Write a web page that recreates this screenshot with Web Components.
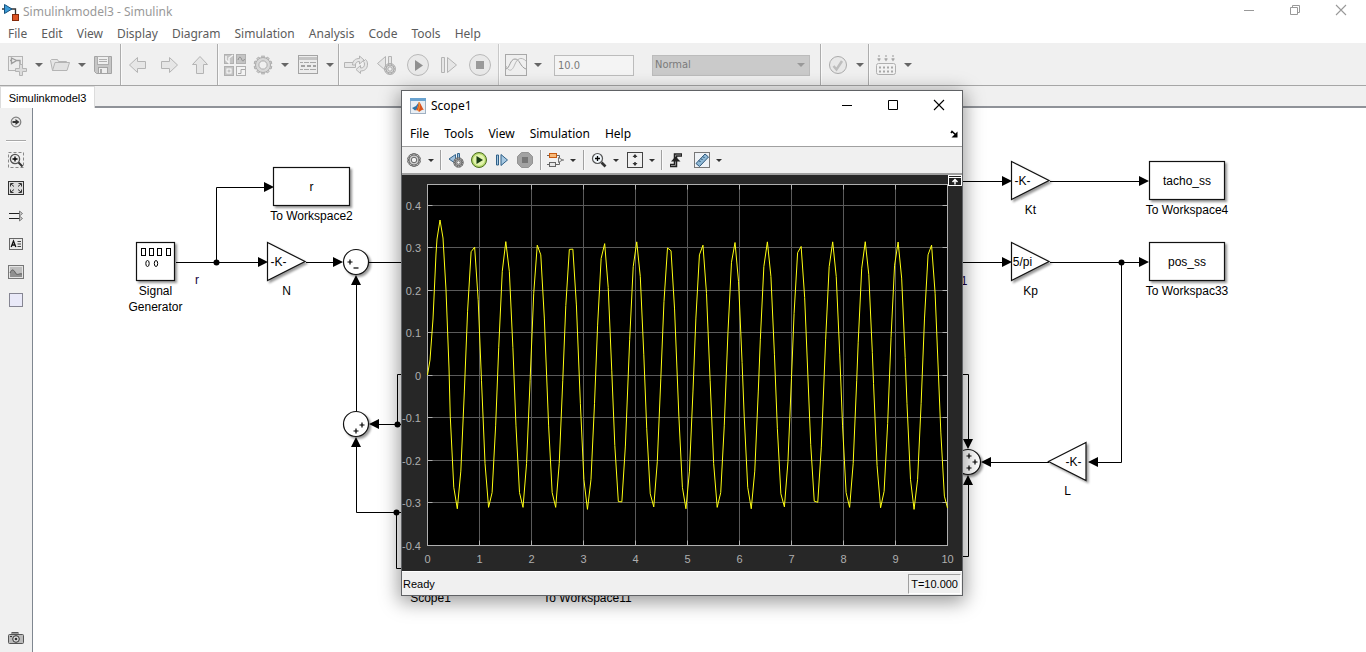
<!DOCTYPE html>
<html lang="en">
<head>
<meta charset="utf-8">
<title>Simulinkmodel3 - Simulink</title>
<style>
  html, body { height: 100%; margin: 0; }
  body { overflow: hidden; background: #fff; font: 12px/16px "Noto Sans", "Open Sans", sans-serif; color: #000; }
</style>
</head>
<body>
<model-editor></model-editor>
<script>
const RESET = `
  *, *::before, *::after { box-sizing: border-box; }
  button { font: inherit; color: inherit; background: none; border: 0; padding: 0; margin: 0; }
  svg { display: block; flex: none; }
  :host([hidden]) { display: none; }`;

function define(name, css, html, setup) {
  const t = document.createElement('template');
  t.innerHTML = `<style>${RESET}${css}</style>${html}`;
  customElements.define(name, class extends HTMLElement {
    constructor() {
      super();
      this.attachShadow({ mode: 'open' }).append(t.content.cloneNode(true));
    }
    connectedCallback() { if (setup) setup(this, this.shadowRoot); }
  });
}

/* ---------- icons ---------- */
const gear = (cx, cy, r, fill, stroke, hole) => {
  let teeth = '';
  for (let i = 0; i < 10; i++) teeth += `<rect x="${cx - 1.3}" y="${cy - r - 1.4}" width="2.6" height="3" fill="${fill}" stroke="${stroke}" stroke-width=".9" transform="rotate(${i * 36} ${cx} ${cy})"/>`;
  return teeth + `<circle cx="${cx}" cy="${cy}" r="${r}" fill="${fill}" stroke="${stroke}"/><circle cx="${cx}" cy="${cy}" r="${r * 0.55}" fill="${hole}" stroke="${stroke}"/>`;
};
const G = '#b4b4b4', F = '#e6e6e6';
const ICONS = {
  newmodel: [22, 22, `<rect x="2.5" y="2.5" width="14" height="14" fill="#ececec" stroke="${G}"/><path d="M4 6.5h2M5.5 4v5.5l5-3zM10 6.5h4v4" fill="none" stroke="#9c9c9c" stroke-width="1.3"/><path d="M13.5 10.5h3v4h4v3h-4v4h-3v-4h-4v-3h4z" fill="#dcdcdc" stroke="${G}"/>`],
  open: [22, 16, `<path d="M1.5 3.5l2 10h14V4.500h-8l-1-2h-6z" fill="#e6e6e6" stroke="${G}"/><path d="M3.500 13.500L6 5.500h14.500l-2.500 8z" fill="#e2e2e2" stroke="${G}"/>`],
  save: [20, 20, `<path d="M1.5 1.5h17v17h-15l-2-2z" fill="#c6c6c6" stroke="#a4a4a4"/><rect x="4.5" y="1.5" width="11" height="8" fill="#efefef" stroke="#adadad"/><path d="M6 4.5h8M6 6.5h8" stroke="#b0b0b0"/><rect x="5.5" y="12.5" width="9" height="6" fill="#eee" stroke="#a4a4a4"/><rect x="7" y="14" width="2" height="4" fill="#aaa"/>`],
  back: [20, 18, `<path d="M1.5 9L9.5 1.5v4h8v7h-8v4z" fill="${F}" stroke="${G}"/>`],
  forward: [20, 18, `<path d="M18.5 9L10.5 1.5v4h-8v7h8v4z" fill="${F}" stroke="${G}"/>`],
  up: [18, 20, `<path d="M9 1.5L1.5 9.5h4v9h7v-9h4z" fill="${F}" stroke="${G}"/>`],
  library: [22, 22, `<g fill="#c4c4c4" stroke="#b0b0b0"><rect x=".5" y=".5" width="9" height="9"/><rect x="12.5" y=".5" width="9" height="9"/><rect x=".5" y="12.5" width="9" height="9"/><rect x="12.5" y="12.5" width="9" height="9" fill="#f3f3f3"/></g><path d="M2 2v4l3 3V4l4-3" fill="none" stroke="#f3f3f3" stroke-width="1.5"/><path d="M14 6c1-4 3-3 3.5-1s2 3 3 0" fill="none" stroke="#8c8c8c"/><rect x="3" y="15" width="4" height="4" fill="#c4c4c4" stroke="#fff"/><path d="M14 19.5h3v-4h4" fill="none" stroke="#a6a6a6"/>`],
  config: [22, 22, gear(11, 11, 7.5, '#d8d8d8', '#adadad', '#f0f0f0')],
  explorer: [20, 19, `<rect x=".5" y=".5" width="19" height="18" fill="#ececec" stroke="#a4a4a4"/><path d="M1 3.5h18" stroke="#c4c4c4" stroke-width="3"/><path d="M2 7.5h3m1 0h5m1 0h6M2 14.5h3m1 0h5m1 0h6" stroke="#a8a8a8"/><path d="M3 11h4m2 0h4m2 0h3" stroke="#a2a2a2" stroke-width="2"/>`],
  fast: [26, 20, `<path d="M1.5 7.500h11v5h-11z" fill="${F}" stroke="${G}"/><path d="M9.500 10c0-4.500 3-6.500 7-6.500V1l4.500 4-4.500 4V6.500c-2.500 0-4 1-4 3.500zM24.500 9c0 5-3 7-7 7v2.500l-4.500-4 4.500-4V13c2.500 0 4-1 4-4 0-1-.5-2-1-2.500l2-2c1.500 1 2 3 2 4.500z" fill="${F}" stroke="${G}"/>`],
  stepback: [22, 22, `<path d="M9.5 2.5v14L1.5 9.5zM12.5 2.5h3v8h-3z" fill="${F}" stroke="${G}"/>${gear(14, 15, 4, '#ddd', '#aaa', '#f0f0f0')}`],
  run: [24, 24, `<circle cx="12" cy="12" r="10.5" fill="#e9e9e9" stroke="#b9b9b9"/><path d="M9 7l8 5.5L9 18z" fill="#8f8f8f"/>`],
  step: [20, 18, `<path d="M2.5 1.5h3v15h-3zM8.5 1.5v15l9-7.5z" fill="${F}" stroke="${G}"/>`],
  stop: [24, 24, `<circle cx="12" cy="12" r="10.5" fill="#e9e9e9" stroke="#b9b9b9"/><rect x="8" y="8" width="8" height="8" fill="#9a9a9a"/>`],
  scope: [22, 22, `<rect x=".5" y=".5" width="21" height="21" fill="#efefef" stroke="#a8a8a8"/><path d="M1 15C5 14 5 5 10 5s5 8 11 10" fill="none" stroke="#9c9c9c"/><path d="M1 12c4 8 7 3 9-2s6-8 11-3" fill="none" stroke="#b8b8b8"/>`],
  check: [20, 20, `<circle cx="10" cy="10" r="8.5" fill="#e8e8e8" stroke="#ababab"/><path d="M5.5 11l3 3.5L14 6" fill="none" stroke="#bdbdbd" stroke-width="2.5"/>`],
  build: [22, 22, `<path d="M4 1v4M11 1v4M18 1v4" stroke="#a8a8a8" stroke-width="1.2" stroke-dasharray="2 1"/><path d="M2 4.5h4L4 7.5zM9 4.5h4l-2 3zM16 4.5h4l-2 3z" fill="#a8a8a8"/><rect x="1.5" y="9.5" width="19" height="11" rx="2" fill="#f2f2f2" stroke="#b0b0b0"/><path d="M4 13.5h14M4 17.5h14" stroke="#a8a8a8" stroke-width="2" stroke-dasharray="2 2"/>`],
  /* palette */
  hide: [12, 12, `<circle cx="6" cy="6" r="4.8" fill="#e8e8e8" stroke="#808080" stroke-width="1.2"/><path d="M2.5 5h3V3l4 3-4 3V7h-3z" fill="#333"/>`],
  zoomarea: [16, 16, `<rect x=".5" y=".5" width="15" height="15" fill="none" stroke="#888" stroke-dasharray="3 2"/><circle cx="7" cy="7" r="4.6" fill="#eee" stroke="#555" stroke-width="1.3"/><path d="M4.5 7h5M7 4.5v5" stroke="#000" stroke-width="1.3"/><path d="M10.5 10.5l4 4" stroke="#333" stroke-width="2"/>`],
  fit: [16, 14, `<rect x=".5" y=".5" width="15" height="13" fill="#ddd" stroke="#333"/><path d="M2.5 5.5v-3h3M10.5 2.5h3v3M13.5 8.5v3h-3M5.5 11.5h-3v-3M3 3l3 2.5M13 3l-3 2.5M13 11l-3-2.5M3 11l3-2.5" fill="none" stroke="#333"/>`],
  signals: [14, 12, `<path d="M0 3.5h11M0 8.5h11" stroke="#222"/><path d="M10.5 1l3 2.5-3 2.5zM10.5 6l3 2.5-3 2.5z" fill="#ccc" stroke="#666" stroke-width=".8"/>`],
  note: [14, 12, `<rect x=".5" y=".5" width="13" height="11" fill="#eaeaea" stroke="#666"/><path d="M2.2 9L4.5 3 6.8 9M3 7h3" fill="none" stroke="#111" stroke-width="1.3"/><path d="M8.5 3.5H12M8.5 6H12M8.5 8.5H12" stroke="#444"/>`],
  image: [16, 14, `<rect x=".5" y=".5" width="15" height="13" fill="#e4e4e4" stroke="#777"/><rect x="2" y="2" width="12" height="10" fill="#bdbdbd"/><path d="M2 8c2-5 4-3 5.500 0s4 0 6.500 1v3H2z" fill="#8f8f8f"/><path d="M2 8c2-5 4-3 5.500 0s4 0 6.500 1" fill="none" stroke="#5a5a5a"/>`],
  area: [14, 14, `<rect x=".5" y=".5" width="13" height="13" fill="#e9e9f8" stroke="#858592"/>`],
  camera: [16, 12, `<rect x=".5" y="2.5" width="15" height="9" rx="1" fill="#bbb" stroke="#555"/><rect x="4" y=".5" width="6" height="2" fill="#999" stroke="#555"/><circle cx="8" cy="7" r="3.3" fill="#ddd" stroke="#333"/><circle cx="8" cy="7" r="1.3" fill="#333"/><path d="M2 4.5h2" stroke="#333"/>`],
  /* scope window */
  s_gear: [16, 16, gear(8, 8, 5, '#d0d0d0', '#666', '#f2f2f2')],
  s_back: [16, 16, `<path d="M7.5 2.5v9L1 7zM9.5 1.5h2v6h-2z" fill="#9fc0dc" stroke="#35658c"/>${gear(10.5, 10.5, 3.2, '#ccc', '#666', '#f4f4f4')}`],
  s_run: [18, 18, `<circle cx="9" cy="9" r="7.5" fill="#b4d86a" stroke="#4c6d22"/><circle cx="9" cy="9" r="5.8" fill="#e3f4ae"/><path d="M6.5 5l6.5 4-6.5 4z" fill="#173b12"/>`],
  s_step: [14, 14, `<path d="M1.5 2h2v10h-2zM6 1.5v11L12.5 7z" fill="#a6c8e2" stroke="#2f6088"/>`],
  s_stop: [16, 16, `<path d="M4.5.5h7l4 4v7l-4 4h-7l-4-4v-7z" fill="#a2a2a2" stroke="#939393"/><rect x="5" y="5" width="6" height="6" fill="#757575"/>`],
  s_signal: [18, 16, `<path d="M0 3.5h3M0 12.500h3M9 3.500h3.500v3M9 12.500h3.500v-3M12 8h5" fill="none" stroke="#666"/><rect x="2.5" y="1.5" width="7" height="4" fill="#f7b877" stroke="#c65a10"/><rect x="2.5" y="10.5" width="6" height="4" fill="#e6e6e6" stroke="#666"/><path d="M11.500 5.500l4 2.500-4 2.500z" fill="#eee" stroke="#777"/>`],
  s_zoom: [16, 16, `<circle cx="6.5" cy="6.5" r="5" fill="#f0f6fa" stroke="#555" stroke-width="1.2"/><path d="M4 6.5h5M6.5 4v5" stroke="#000" stroke-width="1.3"/><path d="M10.5 10.5l4 4" stroke="#333" stroke-width="2.6"/>`],
  s_scale: [16, 16, `<rect x=".5" y=".5" width="15" height="15" fill="#f0f0f0" stroke="#444"/><path d="M8 3v3M8 10v3" stroke="#333" stroke-width="1.5"/><path d="M5.5 5L8 2l2.5 3zM5.5 11L8 14l2.5-3z" fill="#333"/>`],
  s_trigger: [16, 16, `<path d="M1 13.500h5.500V3H13" fill="none" stroke="#222" stroke-width="3.5"/><path d="M2 13.500h4.500V3H12" fill="none" stroke="#888"/><path d="M2 9.500L6.5 4.500l5 5z" fill="#222"/>`],
  s_measure: [16, 16, `<rect x=".5" y=".5" width="15" height="15" fill="#eef2f6" stroke="#777"/><path d="M2 11.500L11 2 14.500 5 5.500 14.500z" fill="#8fb9d6" stroke="#2c567a"/><path d="M5 8.500l1.500 1.500M7 6.500l1.500 1.500M9 4.500l1.500 1.500" stroke="#1d4465"/>`],
  simulink: [18, 18, `<path d="M0 6h2M8 6h5.500v5" fill="none" stroke="#333" stroke-width="1.3"/><path d="M2.500 1.5v9L10 6z" fill="#3b9ad6" stroke="#16527e"/><rect x="10.5" y="11.5" width="6" height="6" fill="#dd5423" stroke="#832a0b"/>`],
  matlab: [16, 16, `<rect x=".5" y=".5" width="15" height="15" fill="#e9eef3" stroke="#9fb0c2"/><path d="M0 1.5h16" stroke="#6aa3d0" stroke-width="3"/><path d="M2 10l4-2 3-4-2 7-2 1.5z" fill="#2d74a8"/><path d="M9 4c2 1 3 6 5 8-2-1-3 1-5 2-1-2-2-2-3.5-1.5C8 10 8 6 9 4z" fill="#d9541e"/><path d="M9 4c1 3 0 7-1 9" stroke="#f3a13a" fill="none"/>`],
  min: [12, 12, `<path d="M1 6.5h10" stroke="currentColor"/>`],
  max: [12, 12, `<path d="M1.5 1.5h9v9h-9z" fill="none" stroke="currentColor"/>`],
  restore: [12, 12, `<path d="M1.5 3.5h7v7h-7zM3.5 3.5v-2h7v7h-2" fill="none" stroke="currentColor"/>`],
  close: [12, 12, `<path d="M1 1l10 10M11 1L1 11" stroke="currentColor" stroke-width="1.1"/>`],
  dock: [8, 8, `<path d="M1 3l1-1.5L6 5" fill="none" stroke="#000" stroke-width="1.5"/><path d="M7.5 1.5v6h-6z" fill="#000"/>`],
  expand: [14, 12, `<rect x=".5" y=".5" width="13" height="10" fill="#222" stroke="#fff"/><path d="M1 2.5h12" stroke="#fff"/><path d="M7 9.5V5M4.5 7L7 4.5 9.5 7" fill="none" stroke="#fff" stroke-width="1.5"/>`],
};

define('app-icon', `:host { display: block; flex: none; }`, `<div></div>`, (el, root) => {
  const [w, h, body] = ICONS[el.getAttribute('name')];
  root.querySelector('div').innerHTML = `<svg width="${w}" height="${h}" viewBox="0 0 ${w} ${h}" aria-hidden="true">${body}</svg>`;
});

/* Icon button, optionally with a drop-down arrow beside it */
define('tool-button', `
  :host { display: flex; align-items: center; --w: 26px; --arrow: 17px; }
  :host([compact]) { --w: 20px; --arrow: 14px; }
  button { display: grid; place-items: center; width: var(--w); height: 26px; }
  .more { display: none; width: var(--arrow); }
  :host([menu]) .more { display: grid; }
  i { border: 4px solid transparent; border-top-color: #666; border-bottom: 0; }
  :host([compact]) i { border-width: 3px; border-bottom: 0; border-top-color: #333; }`,
  `<button class="main"></button><button class="more"><i></i></button>`,
  (el, root) => {
    const [main, more] = root.querySelectorAll('button');
    main.innerHTML = `<app-icon name="${el.getAttribute('icon')}"></app-icon>`;
    main.setAttribute('aria-label', el.getAttribute('label'));
    more.setAttribute('aria-label', el.getAttribute('label') + ' options');
  });

define('tool-group', `
  :host { display: flex; align-items: center; gap: var(--gap, 0); padding: 0 var(--end, 0) 0 4px; border-right: 1px solid #adadad; box-shadow: 1px 0 #fafafa; }
  :host([soft]) { border-color: #c8c8c8; }
  :host([last]) { border: 0; box-shadow: none; }
  :host([compact]) { padding-left: 5px; height: 20px; border-color: #a0a0a0; }`,
  `<slot></slot>`);

define('menu-bar', `
  :host { display: block; }
  nav { display: flex; gap: var(--menu-gap, 14px); padding: 0 8px; align-items: center; height: 100%; }
  button { white-space: nowrap; }
  .end { margin-left: auto; }
  :host([dockable]) nav { padding-right: 4px; }`,
  `<nav></nav>`,
  (el, root) => {
    root.querySelector('nav').innerHTML = el.getAttribute('items').split(',').map(s => `<button>${s}</button>`).join('')
      + (el.hasAttribute('dockable') ? '<button class="end" aria-label="Dock"><app-icon name="dock"></app-icon></button>' : '');
  });

define('window-title', `
  :host { display: flex; align-items: center; }
  h1 { margin: 0; font: inherit; }
  .icon { margin-right: var(--icon-gap, 5px); }
  .controls { margin-left: auto; display: flex; align-self: flex-start; }
  .controls button { width: 46px; height: var(--control-height, 28px); display: grid; place-items: center; }`,
  `<div class="icon"></div><h1><slot></slot></h1>
   <div class="controls">
     <button aria-label="Minimize"><app-icon name="min"></app-icon></button>
     <button class="size" aria-label="Resize"></button>
     <button aria-label="Close"><app-icon name="close"></app-icon></button>
   </div>`,
  (el, root) => {
    root.querySelector('.icon').innerHTML = `<app-icon name="${el.getAttribute('icon')}"></app-icon>`;
    root.querySelector('.size').innerHTML = `<app-icon name="${el.getAttribute('size')}"></app-icon>`;
  });

define('main-toolbar', `
  :host { display: flex; height: 43px; background: #f0f0f0; border-top: 1px solid #f0f0f0; border-bottom: 1px solid #a6a6a6; }
  label { display: flex; padding-top: 1px; }
  input, select { height: 21px; font: 11px/16px "DejaVu Sans Condensed", "Noto Sans", sans-serif; color: #7a7a7a; border: 1px solid #bcbcbc; border-radius: 0; margin: 0; padding: 0 3px; outline: 0; appearance: none; }
  input { width: 80px; background: #f4f4f4; }
  .mode { position: relative; margin-left: 10px; }
  select { width: 158px; background: #cacaca; padding: 0 2px; }
  .mode::after { content: ""; position: absolute; right: 5px; top: 9px; border: 4px solid transparent; border-top-color: #999; border-bottom: 0; }`,
  `<tool-group style="--end:4px">
     <tool-button icon="newmodel" label="New model" menu></tool-button>
     <tool-button icon="open" label="Open" menu></tool-button>
     <tool-button icon="save" label="Save"></tool-button>
   </tool-group>
   <tool-group style="--gap:5px;--end:4px">
     <tool-button icon="back" label="Back"></tool-button>
     <tool-button icon="forward" label="Forward"></tool-button>
     <tool-button icon="up" label="Up to parent"></tool-button>
   </tool-group>
   <tool-group style="--gap:2px">
     <tool-button icon="library" label="Library browser"></tool-button>
     <tool-button icon="config" label="Model configuration" menu></tool-button>
     <tool-button icon="explorer" label="Model explorer" menu></tool-button>
   </tool-group>
   <tool-group soft style="--gap:5px;--end:5px">
     <tool-button icon="fast" label="Fast restart"></tool-button>
     <tool-button icon="stepback" label="Step back"></tool-button>
     <tool-button icon="run" label="Run"></tool-button>
     <tool-button icon="step" label="Step forward"></tool-button>
     <tool-button icon="stop" label="Stop"></tool-button>
   </tool-group>
   <tool-group style="--gap:8px;--end:10px">
     <tool-button icon="scope" label="Data inspector" menu></tool-button>
     <label><input value="10.0" aria-label="Stop time"></label>
     <label class="mode"><select aria-label="Simulation mode"><option>Normal</option></select></label>
   </tool-group>
   <tool-group>
     <tool-button icon="check" label="Model advisor" menu></tool-button>
   </tool-group>
   <tool-group last>
     <tool-button icon="build" label="Build model" menu></tool-button>
   </tool-group>`);

define('tab-strip', `
  :host { display: flex; height: 22px; background: #f0f0f0; border-bottom: 2px solid #8f9298; }
  button { width: 95px; height: 22px; background: #fff; border: 1px solid #dcdcdc; border-bottom: 0; font: 11px/20px "Liberation Sans", Arial, sans-serif; white-space: nowrap; }`,
  `<button role="tab" aria-selected="true"><slot></slot></button>`);

define('tool-palette', `
  :host { display: flex; flex-direction: column; align-items: center; width: 32px; background: #f0f0f0; }
  tool-button { height: 28px; }
  hr { width: 20px; height: 2px; margin: 4px 0; border: 0; border-top: 1px solid #a8a8a8; border-bottom: 1px solid #fff; }
  .bottom { margin-top: auto; }`,
  `<tool-button icon="hide" label="Hide browser"></tool-button><hr>
   <tool-button icon="zoomarea" label="Zoom"></tool-button>
   <tool-button icon="fit" label="Fit to view"></tool-button>
   <tool-button icon="signals" label="Sample time"></tool-button>
   <tool-button icon="note" label="Annotation"></tool-button>
   <tool-button icon="image" label="Image"></tool-button>
   <tool-button icon="area" label="Area"></tool-button>
   <tool-button class="bottom" icon="camera" label="Viewmarks"></tool-button>`);

/* A node of the diagram, placed by its x and y on the canvas */
define('sim-block', `
  :host { position: absolute; display: block; width: var(--w); }
  .shape { position: relative; height: var(--h); }
  .shape svg { position: absolute; inset: 0; overflow: visible; }
  .value { position: relative; display: grid; place-items: center; height: 100%; white-space: nowrap; }
  :host([kind=note]) { color: #20003c; }
  :host([kind=gain]) .value { padding-right: 16px; }
  :host([kind=gainleft]) .value { padding-left: 12px; }
  .outline { filter: drop-shadow(2px 2px 1px #0006); }
  .name { display: flex; justify-content: center; margin: 2px -40px 0; white-space: pre; text-align: center; }`,
  `<div class="shape"><svg width="1" height="1"></svg><div class="value"></div></div><div class="name"></div>`,
  (el, root) => {
    const a = k => el.getAttribute(k) || '';
    const w = +a('w') || 39, h = +a('h') || 39, kind = a('kind') || 'box';
    el.style.cssText = `left:${a('x')}px;top:${a('y')}px;--w:${w}px;--h:${h}px`;
    const style = 'fill="#fff" stroke="#111" stroke-width="1.2" class="outline"';
    const plus = (x, y) => `<path d="M${x - 2.5} ${y}h5M${x} ${y - 2.5}v5" stroke="#000" stroke-width="1.2"/>`;
    const minus = (x, y) => `<path d="M${x - 2.5} ${y}h5" stroke="#000" stroke-width="1.2"/>`;
    const shapes = {
      box: `<rect x=".5" y=".5" width="${w - 1}" height="${h - 1}" ${style}/>`,
      gain: `<path d="M.5 .5v${h - 1}L${w - 1} ${h / 2}z" ${style}/>`,
      gainleft: `<path d="M${w - 1} .5v${h - 1}L.5 ${h / 2}z" ${style}/>`,
      sum: `<circle cx="${w / 2}" cy="${h / 2}" r="12.5" ${style}/>`,
      note: '',
    };
    let svg = shapes[kind];
    if (a('signs')) svg += a('signs').split(';').map(s => {
      const [t, x, y] = s.split(' ');
      return (t === 'p' ? plus : minus)(+x, +y);
    }).join('');
    if (el.hasAttribute('generator'))
      svg += [5.5, 13.5, 21.5, 30.5].map(x => `<rect x="${x}" y="6.5" width="4" height="7" fill="none" stroke="#000"/>`).join('')
        + `<ellipse cx="11.5" cy="21.5" rx="1.7" ry="3" fill="none" stroke="#000"/><ellipse cx="20" cy="21.5" rx="1.7" ry="3" fill="none" stroke="#000"/>`;
    root.querySelector('svg').innerHTML = svg;
    root.querySelector('.value').textContent = a('value');
    root.querySelector('.name').textContent = a('name').replace('|', '\n');
  });

define('model-canvas', `
  :host { display: block; position: relative; overflow: hidden; background: #fff; border-left: 1px solid #7f8790; font: 12px/16px "Liberation Sans", Arial, sans-serif; }
  .wires { position: absolute; inset: 0; }`,
  `<svg class="wires" width="1332" height="544" viewBox="33 108 1332 544" aria-hidden="true">
     <g fill="none" stroke="#000">
       <path d="M176 262.5H258M216.5 262V187.5H264M306 262.5H334M369 262.5H402"/>
       <path d="M356.5 284V412M378 424.5H402M397.5 424V374.5H402M356.5 447V512.5H402M396.5 512V568.5H402"/>
       <path d="M962 181.5H1002M1050 181.5H1140M962 262.5H1002M1050 262.5H1140M1121.5 262V462.5H1097M1049 462.5H991"/>
       <path d="M962 374.5H968.5V440M968.5 484V556.5H962"/>
     </g>
     <g>
       <path d="M268 262l-10-5v10zM274 187l-10-5v10zM343 262l-10-5v10zM356 275l-5 10h10zM369 424l10-5v10zM356 437l-5 10h10z"/>
       <path d="M1012 181l-10-5v10zM1149 181l-10-5v10zM1012 262l-10-5v10zM1149 262l-10-5v10zM1088 462l10-5v10zM981 462l10-5v10zM968 449l-5-10h10zM968 475l-5 10h10z"/>
       <circle cx="216.5" cy="262.5" r="3"/><circle cx="397.5" cy="424.5" r="3"/><circle cx="396.5" cy="512.5" r="3"/><circle cx="1121.5" cy="262.5" r="3"/>
     </g>
   </svg>
   <sim-block x="103" y="134" generator name="Signal|Generator"></sim-block>
   <sim-block x="240" y="59" w="77" value="r" name="To Workspace2"></sim-block>
   <sim-block x="234" y="134" kind="gain" value="-K-" name="N"></sim-block>
   <sim-block x="310" y="141" w="26" h="26" kind="sum" signs="p 7 13;m 13 19"></sim-block>
   <sim-block x="310" y="303" w="26" h="26" kind="sum" signs="p 19 14;p 13 20"></sim-block>
   <sim-block x="160" y="164" w="8" h="16" kind="note" value="r"></sim-block>
   <sim-block x="927" y="165" w="8" h="16" kind="note" value="1"></sim-block>
   <sim-block x="978" y="53" kind="gain" value="-K-" name="Kt"></sim-block>
   <sim-block x="1116" y="53" w="76" value="tacho_ss" name="To Workspace4"></sim-block>
   <sim-block x="978" y="134" kind="gain" value="5/pi" name="Kp"></sim-block>
   <sim-block x="1116" y="134" w="76" value="pos_ss" name="To Workspac33"></sim-block>
   <sim-block x="1015" y="334" kind="gainleft" value="-K-" name="L"></sim-block>
   <sim-block x="922" y="341" w="26" h="26" kind="sum" signs="p 14 7;p 20 13;p 14 19"></sim-block>
   <sim-block x="378" y="441" name="Scope1"></sim-block>
   <sim-block x="516" y="441" w="77" name="To Workspace11"></sim-block>`);

/* The trace: a start-up transient, then a sine wave joined by straight lines between samples */
define('scope-plot', `
  :host { display: block; position: relative; background: #272727; height: 396px; }
  text { font: 11px "Liberation Sans", Arial, sans-serif; fill: #afafaf; }
  .x { text-anchor: middle; } .y { text-anchor: end; }
  button { position: absolute; right: 0; top: 0; }`,
  `<svg width="560" height="396" role="img" aria-label="Scope signal"></svg>
   <button aria-label="Maximize axes"><app-icon name="expand"></app-icon></button>`,
  (el, root) => {
    const X0 = 25.5, X1 = 545.5, TOP = 9.5, BOTTOM = 370.5, ZERO = 200.5, UNIT = 425;
    let out = `<rect x="${X0}" y="${TOP}" width="${X1 - X0}" height="${BOTTOM - TOP}" fill="#000"/>`;
    let grid = '', ticks = '', labels = '';
    for (let i = 0; i <= 10; i++) {
      const x = X0 + 52 * i;
      grid += `M${x} ${TOP}V${BOTTOM}`;
      ticks += `M${x} ${TOP}v5M${x} ${BOTTOM}v-5`;
      labels += `<text class="x" x="${x}" y="388">${i}</text>`;
    }
    for (let i = -4; i <= 4; i++) {
      const y = Math.round(ZERO - i * 42.5) - .5;
      grid += `M${X0} ${y}H${X1}`;
      ticks += `M${X0} ${y}h5M${X1} ${y}h-5`;
      labels += `<text class="y" x="19" y="${y + 4.5}">${i === 0 ? '0' : (i / 10).toFixed(1)}</text>`;
    }
    /* distance from each crest or trough to the sample nearest to it */
    const shift = [.5, 1.5, -.9, 0, .9, -1.2, .9, 1.75, 0, .9, 1.75, .3, 1, -1.6, .5, 1.2, -.9, .6, .5, .3,
                   1, 1.4, 1.7, .3, .9, .2, -.8, .4, 0, 1.2, 1.2];
    const half = 16.33, step = 3.53;
    const points = [[25.5, 200], [28, 185], [31, 144], [34, 79], [35, 64], [38, 45], [41, 63], [44, 115], [47, 193]];
    shift.forEach((s, i) => {
      const k = i - 3, centre = 103.8 + k * half;
      for (let j = -2; j <= 2; j++) {
        const dx = s + j * step, x = centre + dx;
        if (Math.abs(dx) > half / 2 || x > X1) continue;
        points.push([x, ZERO - UNIT * .315 * Math.cos(Math.PI * (k + dx / half))]);
      }
    });
    points.push([X1, 333]);
    out += `<path d="${grid}" stroke="#5a5a5a" fill="none"/><rect x="${X0}" y="${TOP}" width="${X1 - X0}" height="${BOTTOM - TOP}" fill="none" stroke="#afafaf"/>
      <path d="${ticks}" stroke="#afafaf" fill="none"/>${labels}
      <polyline points="${points.map(p => p.join()).join(' ')}" fill="none" stroke="#ffff11" stroke-linejoin="round"/>`;
    root.querySelector('svg').innerHTML = out;
  });

define('scope-window', `
  :host { display: flex; flex-direction: column; width: 562px; background: #fff; border: 1px solid #606265; box-shadow: 0 4px 18px 2px #0006; }
  window-title { height: 30px; padding-left: 8px; }
  menu-bar { height: 25px; --menu-gap: 15px; }
  .tools { display: flex; align-items: center; height: 29px; background: #f0f0f0; border-top: 1px solid #a0a0a0; border-bottom: 2px solid #a0a0a0; }
  tool-group:first-child { padding-left: 2px; }
  footer { display: flex; align-items: center; justify-content: space-between; height: 24px; padding: 2px 1px 1px; border-top: 1px solid #fff; background: #f0f0f0; font: 11px/16px "Liberation Sans", Arial, sans-serif; }
  output { padding: 1px 2px; border: 1px solid #a0a0a0; border-right-color: #fff; border-bottom-color: #fff; }`,
  `<window-title icon="matlab" size="max">Scope1</window-title>
   <menu-bar items="File,Tools,View,Simulation,Help" dockable></menu-bar>
   <div class="tools">
     <tool-group compact style="--end:2px"><tool-button compact icon="s_gear" label="Configuration" menu></tool-button></tool-group>
     <tool-group compact style="--gap:3px;--end:5px">
       <tool-button compact icon="s_back" label="Step back"></tool-button>
       <tool-button compact icon="s_run" label="Run"></tool-button>
       <tool-button compact icon="s_step" label="Step forward"></tool-button>
       <tool-button compact icon="s_stop" label="Stop"></tool-button>
     </tool-group>
     <tool-group compact style="--end:3px"><tool-button compact icon="s_signal" label="Highlight block" menu></tool-button></tool-group>
     <tool-group compact style="--gap:2px;--end:2px">
       <tool-button compact icon="s_zoom" label="Zoom" menu></tool-button>
       <tool-button compact icon="s_scale" label="Scale axes" menu></tool-button>
     </tool-group>
     <tool-group compact last style="--gap:5px">
       <tool-button compact icon="s_trigger" label="Triggers"></tool-button>
       <tool-button compact icon="s_measure" label="Measurements" menu></tool-button>
     </tool-group>
   </div>
   <scope-plot></scope-plot>
   <footer><span>Ready</span><output>T=10.000</output></footer>`);

define('model-editor', `
  :host { display: flex; flex-direction: column; height: 100vh; position: relative; overflow: hidden; }
  .head { height: 24px; padding: 0 2px; color: #999; --icon-gap: 3px; --control-height: 20px; }
  .menu { height: 19px; color: #5c5c5c; }
  .work { flex: 1; display: flex; min-height: 0; }
  model-canvas { flex: 1; }
  scope-window { position: absolute; left: 401px; top: 90px; }`,
  `<window-title class="head" icon="simulink" size="restore">Simulinkmodel3 - Simulink</window-title>
   <menu-bar class="menu" items="File,Edit,View,Display,Diagram,Simulation,Analysis,Code,Tools,Help"></menu-bar>
   <main-toolbar></main-toolbar>
   <tab-strip>Simulinkmodel3</tab-strip>
   <div class="work"><tool-palette></tool-palette><model-canvas></model-canvas></div>
   <scope-window></scope-window>`);
</script>
</body>
</html>
